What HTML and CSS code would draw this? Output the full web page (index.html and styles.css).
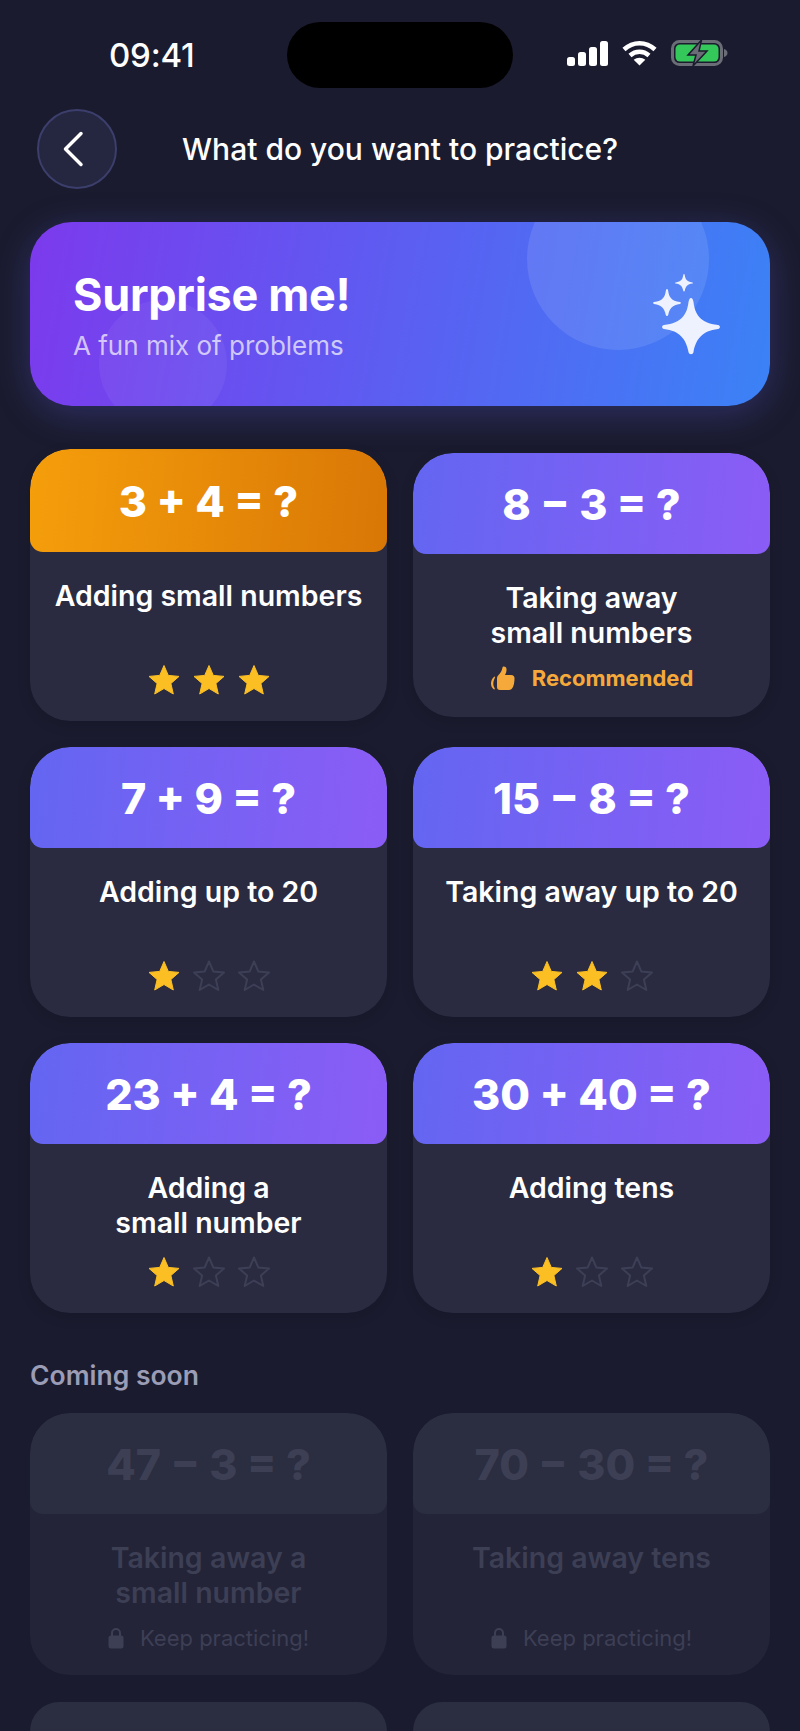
FILE: index.html
```html
<!DOCTYPE html>
<html lang="en">

<head>
  <meta charset="UTF-8">
  <meta name="viewport" content="width=device-width, initial-scale=1.0">
  <title>Practice</title>
  <link rel="stylesheet" href="styles.css">
</head>

<body>
  <svg class="defs" width="0" height="0">
    <symbol id="star" viewBox="0 0 34 34">
      <path d="M17 2.500l4.300 9.900 10.700 1-8.100 7.100 2.400 10.500L17 25.500 7.700 31l2.400-10.500L2 13.400l10.700-1z" stroke-linejoin="round" />
    </symbol>
    <symbol id="lock" viewBox="0 0 16 22">
      <path d="M4 9V6a4 4 0 0 1 8 0v3" fill="none" stroke="currentColor" stroke-width="2" />
      <rect x="0.500" y="8.500" width="15" height="13" rx="2.500" fill="currentColor" />
    </symbol>
  </svg>

  <div class="status-bar">
    <span class="time">09:41</span>
    <div class="island"></div>
    <div class="status-icons">
      <svg width="41" height="25" viewBox="0 0 41 25" fill="#fff">
        <rect x="0" y="16" width="8" height="9" rx="2.500" />
        <rect x="11" y="11" width="8" height="14" rx="2.500" />
        <rect x="22" y="6" width="8" height="19" rx="2.500" />
        <rect x="33" y="0" width="8" height="25" rx="2.500" />
      </svg>
      <svg width="35" height="26" viewBox="0 0 35 26" fill="none" stroke="#fff" stroke-width="4.500">
        <path d="M2 9.500C11 1 24 1 33 9.500" />
        <path d="M8 15.500c5.500-5 13.500-5 19 0" />
        <path d="M17.500 25.500l-5.800-5.800c3.300-2.700 8.300-2.700 11.600 0z" fill="#fff" stroke="none" />
      </svg>
      <svg width="57" height="26" viewBox="0 0 57 26">
        <rect x="1.500" y="1.500" width="49" height="23" rx="7" fill="none" stroke="#6a6c76" stroke-width="3" />
        <rect x="4.500" y="4.500" width="43" height="17" rx="4.500" fill="#34c759" />
        <path d="M53 9c2 .500 3.500 2 3.500 4s-1.500 3.500-3.500 4z" fill="#6a6c76" />
        <path d="M30.500 0L17 15h8l-3 11 14-15h-8z" fill="#6a6c76" stroke="#1a1b2e" stroke-width="1.500" />
      </svg>
    </div>
  </div>

  <header class="top-bar">
    <button class="back-btn">
      <svg width="24" height="36" viewBox="0 0 24 36" fill="none" stroke="#fff" stroke-width="3.500" stroke-linecap="round" stroke-linejoin="round">
        <path d="M18 2.500L2.500 18 18 33.500" />
      </svg>
    </button>
    <h1>What do you want to practice?</h1>
  </header>

  <div class="container">
    <section class="banner">
      <div class="bubble bubble-big"></div>
      <div class="bubble bubble-small"></div>
      <div class="banner-text">
        <h2>Surprise me!</h2>
        <p>A fun mix of problems</p>
      </div>
      <svg class="sparkles" width="70" height="86" viewBox="0 0 70 86" fill="#eef2ff">
        <defs>
          <path id="spark" d="M0-29C1.500-29 2-27 2.500-25C4-13 9-4 27-2C29.500-1.500 29.500 1.500 27 2C11 4 5 12 2.500 25C2 28-2 28-2.500 25C-5 12-11 4-27 2C-29.500 1.500-29.500-1.500-27-2C-9-4-4-13-2.500-25C-2-27-1.500-29 0-29Z" />
        </defs>
        <use href="#spark" transform="translate(41 56)" />
        <use href="#spark" transform="translate(17 32) scale(.48)" />
        <use href="#spark" transform="translate(34 12) scale(.31)" />
      </svg>
    </section>

    <div class="grid">
      <article class="card card-done">
        <div class="card-head head-orange">3 + 4 = ?</div>
        <div class="card-body">
          <h3>Adding small numbers</h3>
          <div class="stars">
            <svg class="star on"><use href="#star" /></svg>
            <svg class="star on"><use href="#star" /></svg>
            <svg class="star on"><use href="#star" /></svg>
          </div>
        </div>
      </article>

      <article class="card card-rec">
        <div class="card-head">8 − 3 = ?</div>
        <div class="card-body">
          <h3>Taking away<br>small numbers</h3>
          <div class="note note-rec">
            <svg width="26" height="25" viewBox="0 0 26 25" fill="#f5a93a">
              <path d="M10 24c-2 0-3-1-3-3v-9c0-1 .500-2 1.500-3 2-2 3.500-4.500 4-7.500.200-1.500 3.800-1.200 4 1.500.200 2-.500 4-1.500 6h6c2.500 0 3.500 1.500 3.500 3 0 5-1 9-2.500 10.500-.500.500-1.500 1.500-3 1.500z" />
              <path d="M4.500 10.500C2 12.500 1 15 1 17.500S2 22 4 23.500c.500 0 1-.500.800-1-1-1.500-1.500-3-1.500-5s.800-4 1.700-6c.200-.500-.200-1-.500-1z" />
            </svg>
            <span>Recommended</span>
          </div>
        </div>
      </article>

      <article class="card">
        <div class="card-head">7 + 9 = ?</div>
        <div class="card-body">
          <h3>Adding up to 20</h3>
          <div class="stars">
            <svg class="star on"><use href="#star" /></svg>
            <svg class="star"><use href="#star" /></svg>
            <svg class="star"><use href="#star" /></svg>
          </div>
        </div>
      </article>

      <article class="card">
        <div class="card-head">15 − 8 = ?</div>
        <div class="card-body">
          <h3>Taking away up to 20</h3>
          <div class="stars">
            <svg class="star on"><use href="#star" /></svg>
            <svg class="star on"><use href="#star" /></svg>
            <svg class="star"><use href="#star" /></svg>
          </div>
        </div>
      </article>

      <article class="card">
        <div class="card-head">23 + 4 = ?</div>
        <div class="card-body">
          <h3>Adding a<br>small number</h3>
          <div class="stars">
            <svg class="star on"><use href="#star" /></svg>
            <svg class="star"><use href="#star" /></svg>
            <svg class="star"><use href="#star" /></svg>
          </div>
        </div>
      </article>

      <article class="card">
        <div class="card-head">30 + 40 = ?</div>
        <div class="card-body">
          <h3>Adding tens</h3>
          <div class="stars">
            <svg class="star on"><use href="#star" /></svg>
            <svg class="star"><use href="#star" /></svg>
            <svg class="star"><use href="#star" /></svg>
          </div>
        </div>
      </article>
    </div>

    <h4 class="section-title">Coming soon</h4>

    <div class="grid grid-locked">
      <article class="card locked">
        <div class="card-head">47 − 3 = ?</div>
        <div class="card-body">
          <h3>Taking away a<br>small number</h3>
          <div class="note">
            <svg class="lock-icon"><use href="#lock" /></svg>
            <span>Keep practicing!</span>
          </div>
        </div>
      </article>

      <article class="card locked">
        <div class="card-head">70 − 30 = ?</div>
        <div class="card-body">
          <h3>Taking away tens</h3>
          <div class="note">
            <svg class="lock-icon"><use href="#lock" /></svg>
            <span>Keep practicing!</span>
          </div>
        </div>
      </article>

      <article class="card locked cut-off"></article>
      <article class="card locked cut-off"></article>
    </div>
  </div>
</body>

</html>
```

FILE: styles.css
```css
html, body {
  height: 1731px;
  overflow: hidden;
}

body {
  font-family: 'Inter', 'Liberation Sans', sans-serif;
  background-color: #1a1b2e;
  color: white;
  margin: 0;
  padding: 0;
}

.defs {
  position: absolute;
}

/* status bar */
.status-bar {
  display: flex;
  align-items: center;
  height: 66px;
  padding: 22px 0 0 109px;
}

.time {
  width: 178px;
  font-size: 33px;
  font-weight: 500;
  letter-spacing: -0.2px;
}

.island {
  width: 226px;
  height: 66px;
  background-color: #000;
  border-radius: 33px;
}

.status-icons {
  display: flex;
  align-items: center;
  gap: 14px;
  margin-left: 54px;
  margin-top: -4px;
}

/* header */
.top-bar {
  display: grid;
  grid-template-columns: 80px 1fr 80px;
  align-items: center;
  margin-top: 21px;
  padding: 0 37px;
}

.top-bar h1 {
  margin: 0;
  font-size: 30px;
  font-weight: 500;
  text-align: center;
}

.back-btn {
  display: flex;
  align-items: center;
  justify-content: center;
  width: 80px;
  height: 80px;
  padding: 0 4px 0 0;
  background-color: #252640;
  border: 2px solid #3c3e6c;
  border-radius: 50%;
}

.container {
  padding: 0 30px;
}

/* banner */
.banner {
  position: relative;
  display: flex;
  align-items: center;
  justify-content: space-between;
  height: 184px;
  margin-top: 33px;
  padding: 0 50px 0 43px;
  background: linear-gradient(100deg, #7c3aed 0%, #3b82f6 100%);
  border-radius: 42px;
  box-shadow: 0 8px 36px rgba(99, 102, 241, 0.28);
  overflow: hidden;
}

.bubble {
  position: absolute;
  border-radius: 50%;
}

.bubble-big {
  left: 497px;
  top: -54px;
  width: 182px;
  height: 182px;
  background-color: rgba(255, 255, 255, 0.1);
}

.bubble-small {
  left: 69px;
  top: 78px;
  width: 128px;
  height: 128px;
  background-color: rgba(255, 255, 255, 0.05);
}

.banner-text {
  position: relative;
}

.banner h2 {
  margin: 0;
  font-size: 45px;
  font-weight: 700;
  letter-spacing: -0.3px;
}

.banner p {
  margin: 8px 0 0;
  font-size: 26px;
  color: rgba(255, 255, 255, 0.7);
}

.sparkles {
  position: relative;
}

/* cards */
.grid {
  display: grid;
  grid-template-columns: 1fr 1fr;
  gap: 26px;
  margin-top: 43px;
}

.card {
  display: flex;
  flex-direction: column;
  height: 270px;
  background-color: #2a2b40;
  border-radius: 40px;
  overflow: hidden;
  box-shadow: 0 4px 14px rgba(0, 0, 0, 0.12);
}

.card-done {
  height: 272px;
}

.card-rec {
  height: 264px;
  margin-top: 4px;
}

.card-head {
  display: flex;
  align-items: center;
  justify-content: center;
  height: 101px;
  flex-shrink: 0;
  background: linear-gradient(95deg, #6366f1 0%, #8b5cf6 100%);
  border-radius: 40px 40px 13px 13px;
  font-size: 43px;
  font-weight: 800;
}

.head-orange {
  height: 103px;
  background: linear-gradient(95deg, #f59e0b 0%, #d97706 100%);
}

.card-body {
  display: flex;
  flex-direction: column;
  flex: 1;
  padding: 26px 0 24px;
  text-align: center;
}

.card-body h3 {
  margin: 0;
  font-size: 28.5px;
  font-weight: 600;
  line-height: 35px;
}

.stars {
  display: flex;
  justify-content: center;
  gap: 11px;
  margin-top: auto;
}

.star {
  width: 34px;
  height: 34px;
  fill: none;
  stroke: #3d3f56;
  stroke-width: 2;
}

.star.on {
  fill: #fbbf24;
  stroke: #fbbf24;
  stroke-width: 1;
}

.note {
  display: flex;
  align-items: center;
  justify-content: center;
  gap: 16px;
  margin-top: auto;
  font-size: 22px;
}

.note-rec {
  color: #f5a93a;
  font-weight: 700;
  padding-bottom: 2px;
}

/* coming soon */
.section-title {
  margin: 47px 0 0;
  font-size: 26.5px;
  font-weight: 600;
  line-height: 30px;
  color: #9a9db5;
}

.grid-locked {
  row-gap: 27px;
  margin-top: 23px;
}

.locked {
  height: 262px;
  background-color: #232438;
  box-shadow: none;
}

.locked .card-head {
  background: #2b2d40;
  color: #3d3f55;
}

.locked .card-body h3 {
  color: #3d3f55;
}

.locked .note {
  color: #3d3f55;
}

.lock-icon {
  width: 16px;
  height: 22px;
}

/* bottom row, only its top shows above the fold */
.cut-off {
  height: 29px;
  background-color: #2b2d40;
  border-radius: 40px 40px 0 0;
}
```
